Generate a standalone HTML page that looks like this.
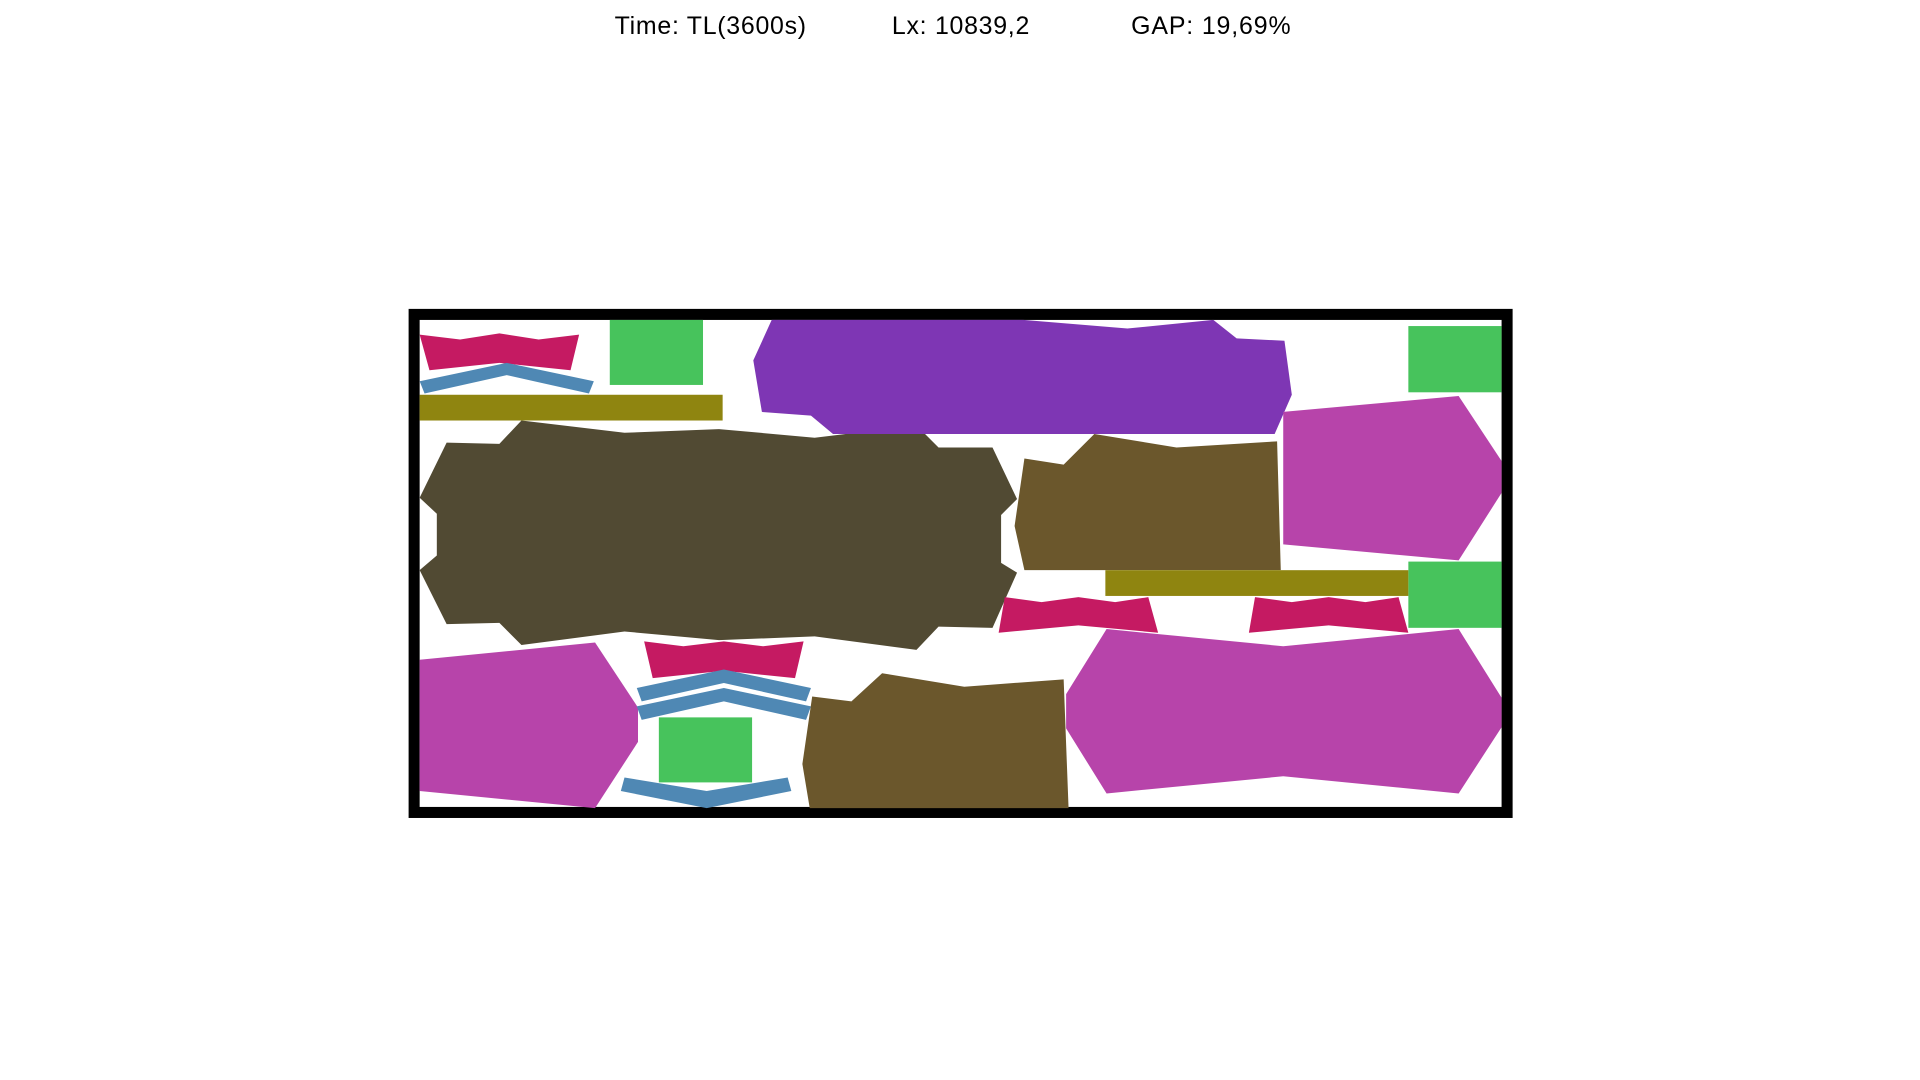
<!DOCTYPE html>
<html><head><meta charset="utf-8"><style>html,body{margin:0;padding:0;background:#fff;width:1920px;height:1080px;overflow:hidden}svg{display:block}</style></head>
<body>
<svg width="1920" height="1080" viewBox="0.9 1.2 1565.2 880.4" preserveAspectRatio="none" xmlns="http://www.w3.org/2000/svg">
<g font-family="Liberation Sans, sans-serif" font-size="20.3" fill="#000">
<text x="502" y="29" textLength="156">Time: TL(3600s)</text>
<text x="728" y="29" textLength="112">Lx: 10839,2</text>
<text x="923" y="29" textLength="130">GAP: 19,69%</text>
</g>
<rect x="338.5" y="257.5" width="891" height="406" fill="#fff" stroke="#000" stroke-width="9"/>
<polygon fill="#c51a62" points="343,274 376,278 408,273 440,278 473,274 466,303 408,297 351,303"/>
<polygon fill="#4f88b4" points="343,312 414,297 485,312 481,322 414,307 347,322"/>
<rect fill="#47c35c" x="498" y="262" width="76" height="53"/>
<rect fill="#8f8510" x="343" y="323" width="247" height="21"/>
<polygon fill="#514a33" points="343,407 365,362 408,363 426,344 510,354 587,351 665,358 748,348 766,366 810,366 830,408 817,421 817,460 830,468 810,513 766,512 748,531 665,520 587,523 510,516 426,527 408,509 365,510 343,466 357,454 357,420"/>
<polygon fill="#7e36b4" points="630,262 835,262 920,269 990,262 1009,277 1048,279 1054,323 1040,355 835,355 680,355 662,340 622,337 615,295"/>
<polygon fill="#6b572c" points="836,375 868,380 893,355 960,366 1042,361 1045,466 836,466 828,430"/>
<polygon fill="#b744aa" points="1047,337 1190,324 1225,377 1225,403 1190,458 1047,445"/>
<rect fill="#47c35c" x="1149" y="267" width="76" height="54"/>
<rect fill="#47c35c" x="1149" y="459" width="76" height="54"/>
<rect fill="#8f8510" x="902" y="466" width="247" height="21"/>
<polygon fill="#c51a62" points="820,488 850,492 880,488 910,492 937,488 945,517 880,511 815,517"/>
<polygon fill="#c51a62" points="1024,488 1054,492 1084,488 1114,492 1141,488 1149,517 1084,511 1019,517"/>
<polygon fill="#b744aa" points="870,567 903,514 1047,528 1190,514 1225,570 1225,594 1190,648 1047,634 903,648 870,595"/>
<polygon fill="#b744aa" points="343,539 486,525 521,578 521,606 486,660 343,646"/>
<polygon fill="#c51a62" points="526,524 558,528 591,524 623,528 656,524 649,554 591,548 533,554"/>
<polygon fill="#4f88b4" points="520,562 591,547 662,562 658,573 591,558 524,573"/>
<polygon fill="#4f88b4" points="520,577 591,562 662,577 658,588 591,573 524,588"/>
<polygon fill="#4f88b4" points="510,635 577,646 643,635 646,646 577,660 507,646"/>
<rect fill="#47c35c" x="538" y="586" width="76" height="53"/>
<polygon fill="#6b572c" points="663,569 695,573 720,550 787,561 868,555 872,660 661,660 655,624"/>
</svg>
</body></html>
